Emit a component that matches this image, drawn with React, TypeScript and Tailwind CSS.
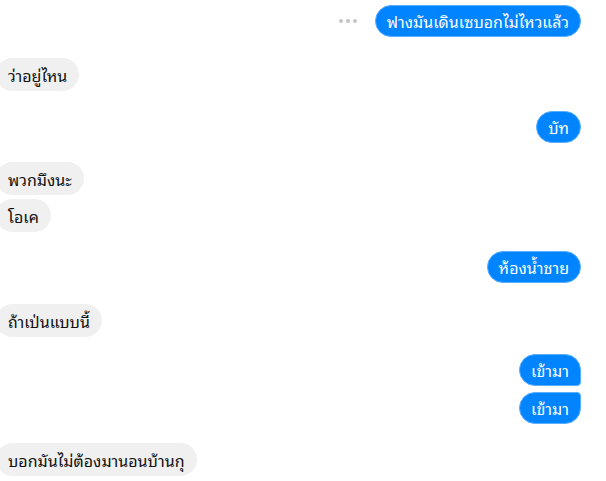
import React from "react";

const blueBase =
  "h-[32px] px-[11px] flex items-center bg-[#0084ff] text-white text-[16px] leading-none border border-[#5aaeff] whitespace-nowrap";

function Blue({ text, cls = "", shape = "rounded-[16px]" }: { text: string; cls?: string; shape?: string }) {
  return (
    <div className={`flex justify-end pr-[25px] ${cls}`}>
      <div className={`${blueBase} ${shape}`}>{text}</div>
    </div>
  );
}

function Gray({ text, cls = "" }: { text: string; cls?: string }) {
  return (
    <div className={`flex justify-start ${cls}`}>
      <div className="h-[33px] -ml-[4px] pl-[12px] pr-[12px] flex items-center bg-[#f0f0f0] text-[#111] text-[16px] leading-none rounded-[17px] whitespace-nowrap">
        {text}
      </div>
    </div>
  );
}

export default function App() {
  return (
    <div className="w-[606px] h-[481px] bg-white overflow-hidden flex flex-col font-['Noto_Sans_Thai_Looped','Noto_Sans',sans-serif]">
      <div className="flex justify-end items-center pr-[25px] mt-[5px]">
        <div className="flex gap-[3px] mr-[18px]">
          <span className="w-[4px] h-[4px] rounded-full bg-[#c4c4c4]" />
          <span className="w-[4px] h-[4px] rounded-full bg-[#c4c4c4]" />
          <span className="w-[4px] h-[4px] rounded-full bg-[#c4c4c4]" />
        </div>
        <div className={`${blueBase} rounded-[16px]`}>ฟางมันเดินเซบอกไม่ไหวแล้ว</div>
      </div>
      <Gray text="ว่าอยู่ไหน" cls="mt-[21px]" />
      <Blue text="บัท" cls="mt-[20px]" />
      <Gray text="พวกมึงนะ" cls="mt-[19px]" />
      <Gray text="โอเค" cls="mt-[4px]" />
      <Blue text="ห้องน้ำชาย" cls="mt-[19px]" />
      <Gray text="ถ้าเป่นแบบนี้" cls="mt-[21px]" />
      <Blue text="เข้ามา" cls="mt-[17px]" shape="rounded-[16px] rounded-br-[4px]" />
      <Blue text="เข้ามา" cls="mt-[6px]" shape="rounded-[16px] rounded-tr-[4px]" />
      <Gray text="บอกมันไม่ต้องมานอนบ้านกุ" cls="mt-[19px]" />
    </div>
  );
}
